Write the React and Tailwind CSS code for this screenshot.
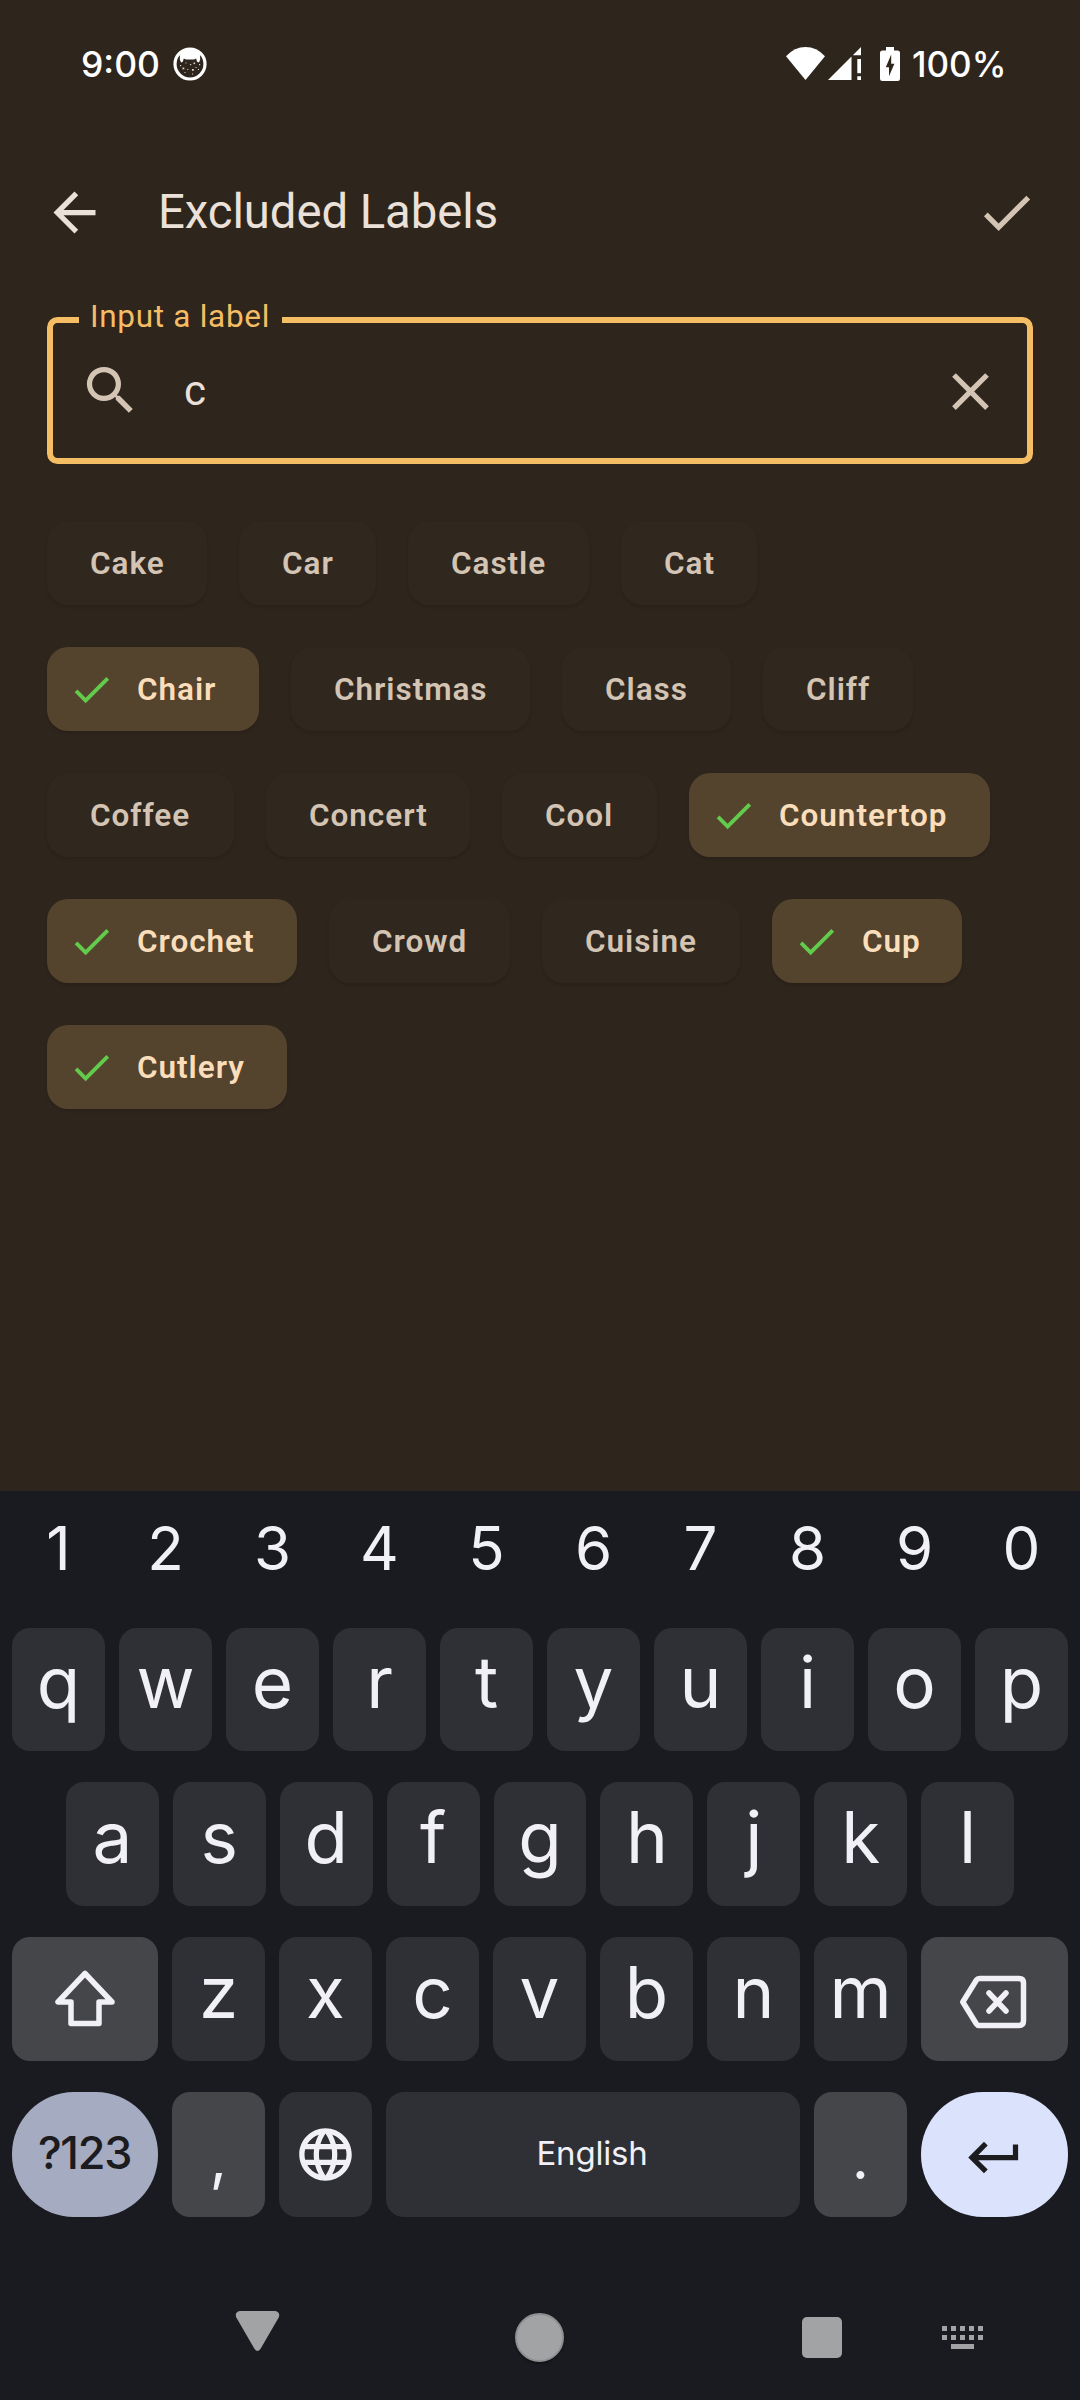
import React from "react";
import { MdArrowBack, MdCheck, MdClose, MdKeyboardReturn, MdLanguage, MdSearch } from "react-icons/md";

const chipRows = [
  [
    { text: "Cake", width: "w-[160px]" },
    { text: "Car", width: "w-[137px]" },
    { text: "Castle", width: "w-[181px]" },
    { text: "Cat", width: "w-[136px]" },
  ],
  [
    { text: "Chair", width: "w-[212px]", selected: true },
    { text: "Christmas", width: "w-[239px]" },
    { text: "Class", width: "w-[169px]" },
    { text: "Cliff", width: "w-[150px]" },
  ],
  [
    { text: "Coffee", width: "w-[187px]" },
    { text: "Concert", width: "w-[204px]" },
    { text: "Cool", width: "w-[155px]" },
    { text: "Countertop", width: "w-[301px]", selected: true },
  ],
  [
    { text: "Crochet", width: "w-[250px]", selected: true },
    { text: "Crowd", width: "w-[181px]" },
    { text: "Cuisine", width: "w-[198px]" },
    { text: "Cup", width: "w-[190px]", selected: true },
  ],
  [{ text: "Cutlery", width: "w-[240px]", selected: true }],
];

function Chip({ text, width, selected }) {
  return (
    <button
      className={
        "flex h-[84px] shrink-0 items-center rounded-[21px] text-[31.5px] font-semibold leading-none tracking-[0.95px] whitespace-nowrap shadow-[0_2px_3px_rgba(0,0,0,0.12)] " +
        width +
        (selected ? " bg-[#54432d] pl-[21px] text-[#fadebc]" : " bg-[#30271e] pl-[43px] text-[#d3c4b4]")
      }
    >
      {selected && <MdCheck className="mr-[22px] size-[47px] shrink-0 text-[#62cb4c]" />}
      <span className="pt-[1px]">{text}</span>
    </button>
  );
}

function CatBadge() {
  return (
    <svg viewBox="0 0 34 34" className="ml-[13px] size-[34px]">
      <circle cx="17" cy="17" r="15" fill="none" stroke="#fff" strokeWidth="3.2" />
      <path
        d="M7 7.5Q11 2 17 2T27 7.5L27.2 12.5 26 15.5 24 14.8 23.2 11.5 21 12.6H13L10.8 11.6 9.8 14.8 8 15.5 6.8 12.2Z"
        fill="#fff"
      />
      <g fill="#fff" fillOpacity="0.8">
        <rect x="7" y="18" width="1.2" height="1.2" />
        <rect x="9.5" y="20.5" width="1.8" height="1.8" />
        <rect x="12.5" y="15.5" width="1" height="1" />
        <rect x="17" y="17" width="1.2" height="1.2" />
        <rect x="20.5" y="15.5" width="1.6" height="1.6" />
        <rect x="19" y="22" width="1.8" height="1.8" />
        <rect x="14.3" y="22" width="1" height="1" />
        <rect x="22.5" y="20" width="1" height="1" />
        <rect x="26" y="17" width="1.2" height="1.2" />
        <rect x="25" y="22" width="1" height="1" />
        <rect x="11.5" y="25" width="1" height="1" />
        <rect x="19" y="26.5" width="1" height="1" />
      </g>
    </svg>
  );
}

function StatusBar() {
  return (
    <div className="flex h-[128px] items-center pl-[81px] pr-[72px] font-[Inter,sans-serif] text-[35.5px] font-medium leading-none text-white">
      <span className="pt-[1px]">9:00</span>
      <CatBadge />
      <svg viewBox="0 0 40 34" className="ml-auto h-[34px] w-[40px]">
        <path d="M0 9.3Q8.5 0 19.5 0T39 9.3L19.5 33Z" fill="#fff" />
      </svg>
      <svg viewBox="0 0 34 34" className="ml-[2px] h-[34px] w-[34px]">
        <path d="M0 33L23.5 9.6V33ZM24.8 8.2L33 0V8.2ZM29.3 12H33V26.3H29.3ZM29.3 29.3H33V33H29.3Z" fill="#fff" />
      </svg>
      <svg viewBox="0 0 20 34" className="ml-[18px] h-[34px] w-[20px]">
        <path
          fillRule="evenodd"
          d="M6 0H14V3.4H17.5Q20 3.4 20 6V31.500Q20 34 17.500 34H2.500Q0 34 0 31.500V6Q0 3.400 2.500 3.400H6ZM11.200 7.500L5.800 20.200H9V29.300L14.400 16.800H11.200Z"
          fill="#fff"
        />
      </svg>
      <span className="ml-[12px] w-[96px] whitespace-nowrap text-[35px]">100%</span>
    </div>
  );
}

function Header() {
  return (
    <div className="flex h-[168px] items-center pl-[43px] pr-[42px] text-[#ebe1d9]">
      <MdArrowBack className="size-[63px]" />
      <h1 className="ml-[52px] pt-[2px] text-[47.25px] font-normal leading-none tracking-[-0.05px]">Excluded Labels</h1>
      <MdCheck className="ml-auto size-[63px] text-[#d3c4b4]" />
    </div>
  );
}

function SearchField() {
  return (
    <div className="relative mx-[47px] mt-[21px] flex h-[147px] items-center rounded-[10.5px] border-[6px] border-[#f5bd64] pl-[26px] pr-[25px] text-[#d3c4b4]">
      <label className="absolute -top-[27px] left-[26px] w-[203px] whitespace-nowrap bg-[#2e251d] pl-[11px] text-[31.5px] leading-[42px] tracking-[0.7px] text-[#f5bd64]">
        Input a label
      </label>
      <MdSearch className="size-[63px]" />
      <span className="ml-[42px] pt-[1px] text-[42px] leading-none text-[#ebe1d9]">c</span>
      <MdClose className="mt-[2px] ml-auto size-[63px]" />
    </div>
  );
}

const LETTER = "bg-[#2f3035] pb-[14px] text-[71px] rounded-[18px] ";

function Key({ className, children }) {
  return <div className={"flex items-center justify-center leading-none " + className}>{children}</div>;
}

function Letters({ letters }) {
  return letters.split("").map((l) => (
    <Key key={l} className={LETTER + "flex-1"}>
      {l}
    </Key>
  ));
}

function Keyboard() {
  return (
    <div className="h-[909px] bg-[#1a1b20] font-[Inter,sans-serif] text-[#f1f0f7]">
      <div className="flex h-[113px] items-center gap-[14px] px-[12px]">
        {"1234567890".split("").map((d) => (
          <Key key={d} className="flex-1 text-[60px]">
            {d}
          </Key>
        ))}
      </div>
      <div className="mt-[24px] flex h-[123px] gap-[14px] px-[12px]">
        <Letters letters="qwertyuiop" />
      </div>
      <div className="mt-[31px] flex h-[124px] gap-[14px] px-[66px]">
        <Letters letters="asdfghjkl" />
      </div>
      <div className="mt-[31px] flex h-[124px] gap-[14px] px-[12px]">
        <Key className="w-[146px] rounded-[18px] bg-[#45464a]">
          <svg viewBox="0 0 64 60" className="h-[60px] w-[64px]" fill="none" stroke="currentColor" strokeWidth="5.5" strokeLinejoin="round">
            <path d="M32 4.5L5 33H18V54.5H46V33H59Z" />
          </svg>
        </Key>
        <Letters letters="zxcvbnm" />
        <Key className="w-[147px] rounded-[18px] bg-[#45464a] pt-[5px] pr-[3px]">
          <svg viewBox="0 0 68 54" className="h-[54px] w-[68px]" fill="none" stroke="currentColor" strokeWidth="5.5" strokeLinejoin="round" strokeLinecap="round">
            <path d="M20.500 3.500H60Q64.500 3.500 64.500 8V46Q64.500 50.500 60 50.500H20.500Q18.500 50.500 17.300 48.800L3.800 27L17.300 5.200Q18.500 3.500 20.500 3.500Z" />
            <path d="M30 18L47 36M47 18L30 36" />
          </svg>
        </Key>
      </div>
      <div className="mt-[31px] flex h-[125px] gap-[14px] px-[12px]">
        <Key className="w-[146px] rounded-[62px] bg-[#a5abc0] pb-[4px] pr-[1px] text-[45px] font-medium tracking-[-1.3px] text-[#1b1b20]">?123</Key>
        <Key className="w-[93px] rounded-[18px] bg-[#45464a] pt-[4px] text-[60px]">,</Key>
        <Key className="w-[93px] rounded-[18px] bg-[#2f3035]">
          <MdLanguage className="size-[63px]" />
        </Key>
        <Key className="flex-1 rounded-[18px] bg-[#2f3035] pb-[2px] pr-[2px] text-[33px] tracking-[-0.2px]">English</Key>
        <Key className="w-[93px] rounded-[18px] bg-[#45464a] pt-[4px] text-[60px]">.</Key>
        <Key className="w-[147px] rounded-[62px] bg-[#dbe2fb] pt-[5px] text-[#1b1b20]">
          <MdKeyboardReturn className="size-[63px]" />
        </Key>
      </div>
      <NavBar />
    </div>
  );
}

function NavBar() {
  return (
    <div className="mt-[57px] flex h-[126px] items-center text-[#a2a3a4]">
      <svg viewBox="0 0 46 42" className="mb-[13px] ml-[235px] h-[42px] w-[45px]">
        <path d="M5 .5H41Q46.500 1.500 44.800 7L26 39.500Q23 43.500 20 39.500L1.200 7Q-.5 1.500 5 .5Z" fill="currentColor" />
      </svg>
      <div className="ml-[235px] size-[49px] rounded-full border-2 border-[#8e8f90] bg-[#a2a3a4] shadow-[0_2px_2px_rgba(0,0,0,0.3)]" />
      <div className="ml-[238px] h-[41px] w-[40px] rounded-[5px] bg-[#a2a3a4]" />
      <div className="ml-[100px] flex w-[41px] flex-col items-center gap-[4px]">
        {[0, 1].map((r) => (
          <div key={r} className="flex w-full justify-between">
            {[0, 1, 2, 3, 4].map((c) => (
              <div key={c} className="size-[5px] bg-[#a2a3a4]" />
            ))}
          </div>
        ))}
        <div className="h-[5px] w-[23px] bg-[#a2a3a4]" />
      </div>
    </div>
  );
}

export default function App() {
  return (
    <div className="h-[2400px] w-[1080px] overflow-hidden bg-[#2e251d] font-[Roboto,sans-serif]">
      <div className="h-[1491px]">
        <StatusBar />
        <Header />
        <SearchField />
        <div className="mt-[57px] flex flex-col gap-[42px] pl-[47px]">
          {chipRows.map((row, i) => (
            <div key={i} className="flex gap-[32px]">
              {row.map((chip) => (
                <Chip key={chip.text} {...chip} />
              ))}
            </div>
          ))}
        </div>
      </div>
      <Keyboard />
    </div>
  );
}
